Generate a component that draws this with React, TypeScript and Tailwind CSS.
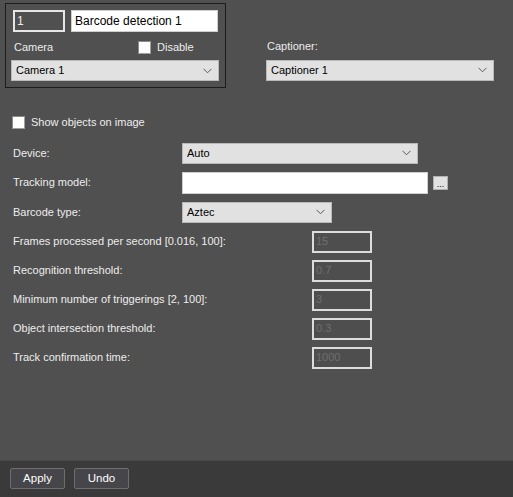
import React from 'react';

const font = { fontFamily: '"Liberation Sans", Arial, sans-serif' };

function Chevron() {
  return (
    <svg width="9" height="6" viewBox="0 0 9 6" className="shrink-0">
      <polyline points="0.5,0.8 4.5,4.8 8.5,0.8" fill="none" stroke="#5a5a5a" strokeWidth="1" />
    </svg>
  );
}

function Select({ value, className }: { value: string; className: string }) {
  return (
    <div
      className={`flex items-center justify-between border border-[#b9b9b9] bg-[#e1e1e1] pl-[4px] pr-[6px] text-[11px] text-black ${className}`}
    >
      <span>{value}</span>
      <Chevron />
    </div>
  );
}

function Check() {
  return <div className="h-[13px] w-[13px] shrink-0 border border-[#a0a0a0] border-l-[#8a8a8a] border-t-[#8a8a8a] bg-white" />;
}

function NumField({ value }: { value: string }) {
  return (
    <div className="flex h-[22px] w-[60px] items-center border-2 border-[#dcdcdc] bg-[#4e4e4e] pl-[2px] text-[11px] text-[#6e6e6e]">
      {value}
    </div>
  );
}

const numRows = [
  ['Frames processed per second [0.016, 100]:', '15'],
  ['Recognition threshold:', '0.7'],
  ['Minimum number of triggerings [2, 100]:', '3'],
  ['Object intersection threshold:', '0.3'],
  ['Track confirmation time:', '1000'],
];

export default function App() {
  return (
    <div className="flex h-[497px] w-[513px] flex-col bg-[#505050] text-[11px] text-[#ededed]" style={font}>
      <div className="flex-1">
        {/* верхний блок */}
        <div className="flex pt-[3px]">
          <div className="ml-[5px] h-[85px] w-[221px] border border-[#1c1c1c] px-[7px] pt-[6px]">
            <div className="flex gap-[6px]">
              <div className="flex h-[22px] w-[52px] items-center border-2 border-[#e6e6e6] pl-[2px] text-[12px]">1</div>
              <div className="flex h-[22px] w-[147px] items-center border border-[#cfcfcf] bg-white pl-[3px] text-[12px] text-black">
                Barcode detection 1
              </div>
            </div>
            <div className="mt-[8px] flex h-[14px] items-center">
              <span className="w-[125px] pl-px">Camera</span>
              <Check />
              <span className="ml-[6px]">Disable</span>
            </div>
            <Select value="Camera 1" className="mt-[6px] h-[21px] w-[208px] -ml-[2px]" />
          </div>
          <div className="ml-[40px] pt-[35px]">
            <div className="pl-px">Captioner:</div>
            <Select value="Captioner 1" className="mt-[5px] h-[21px] w-[228px]" />
          </div>
        </div>

        {/* параметры */}
        <div className="mt-[26px] flex items-center gap-[6px] pl-[12px]">
          <Check />
          <span>Show objects on image</span>
        </div>

        <div className="mt-[12px] flex flex-col gap-[8px] pl-[13px]">
          <div className="flex h-[21px] items-center">
            <span className="w-[169px]">Device:</span>
            <Select value="Auto" className="h-[21px] w-[236px]" />
          </div>
          <div className="flex h-[22px] items-center">
            <span className="w-[169px]">Tracking model:</span>
            <div className="h-[22px] w-[246px] border border-[#cfcfcf] bg-white" />
            <div className="ml-[5px] flex h-[14px] w-[15px] items-end justify-center border border-[#b0b0b0] bg-[#e1e1e1] text-[9px] leading-[10px] text-black">
              ...
            </div>
          </div>
          <div className="flex h-[21px] items-center">
            <span className="w-[169px]">Barcode type:</span>
            <Select value="Aztec" className="h-[21px] w-[150px]" />
          </div>
        </div>

        <div className="mt-[8px] flex flex-col gap-[7px] pl-[13px]">
          {numRows.map(([label, value]) => (
            <div key={label} className="flex h-[22px] items-center">
              <span className="w-[299px]">{label}</span>
              <NumField value={value} />
            </div>
          ))}
        </div>
      </div>

      {/* нижняя панель */}
      <div className="flex h-[37px] items-start gap-[9px] border-t border-[#474747] bg-[#3a3a3a] pl-[10px] pt-[7px]">
        <button className="flex h-[21px] w-[55px] items-center justify-center rounded-[2px] border border-[#6e6e6e] bg-[#45454a] text-[11.5px] text-white">
          Apply
        </button>
        <button className="flex h-[21px] w-[55px] items-center justify-center rounded-[2px] border border-[#6e6e6e] bg-[#45454a] text-[11.5px] text-white">
          Undo
        </button>
      </div>
    </div>
  );
}
